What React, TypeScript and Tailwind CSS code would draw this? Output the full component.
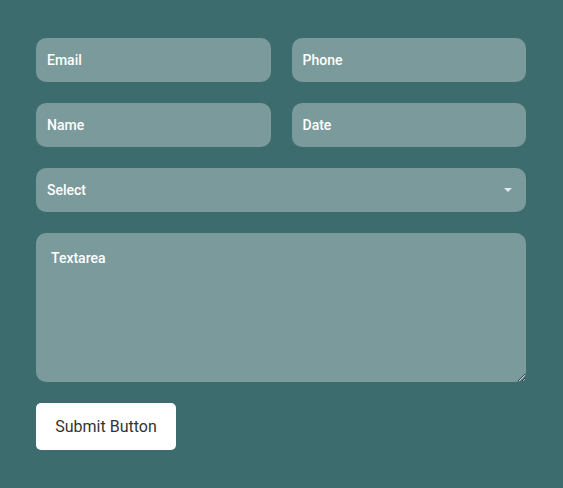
import { useState } from 'react'

export default function App() {
  const [form, setForm] = useState({ email: '', phone: '', name: '', date: '', select: '', message: '' })
  const set = (k: keyof typeof form) => (e: { target: { value: string } }) => setForm({ ...form, [k]: e.target.value })

  const field =
    'h-[44px] w-full rounded-[10px] bg-[#7a9a9b] px-[11px] text-[14px] font-medium text-white placeholder:text-white outline-none'

  return (
    <div className="min-h-screen bg-[#3d6c6e] px-[36px] pt-[38px] pb-[38px] font-['Roboto',sans-serif]">
      <form className="flex w-[490px] flex-col gap-[21px]" onSubmit={e => e.preventDefault()}>
        <div className="grid grid-cols-2 gap-[21px]">
          <input className={field} placeholder="Email" value={form.email} onChange={set('email')} />
          <input className={field} placeholder="Phone" value={form.phone} onChange={set('phone')} />
        </div>
        <div className="grid grid-cols-2 gap-[21px]">
          <input className={field} placeholder="Name" value={form.name} onChange={set('name')} />
          <input className={field} placeholder="Date" value={form.date} onChange={set('date')} />
        </div>
        <div className="relative">
          <select className={field + ' appearance-none'} value={form.select} onChange={set('select')}>
            <option value="">Select</option>
          </select>
          <span className="pointer-events-none absolute right-[14px] top-[20px] h-0 w-0 border-x-[4px] border-t-[4px] border-x-transparent border-t-[#e4eaea]" />
        </div>
        <textarea
          className="h-[149px] w-full rounded-[10px] bg-[#7a9a9b] px-[15px] py-[15px] text-[14px] font-medium text-white placeholder:text-white outline-none"
          placeholder="Textarea"
          value={form.message}
          onChange={set('message')}
        />
        <div>
          <button type="submit" className="h-[47px] w-[140px] rounded-[5px] bg-white text-[16px] text-[#333]">
            Submit Button
          </button>
        </div>
      </form>
    </div>
  )
}
